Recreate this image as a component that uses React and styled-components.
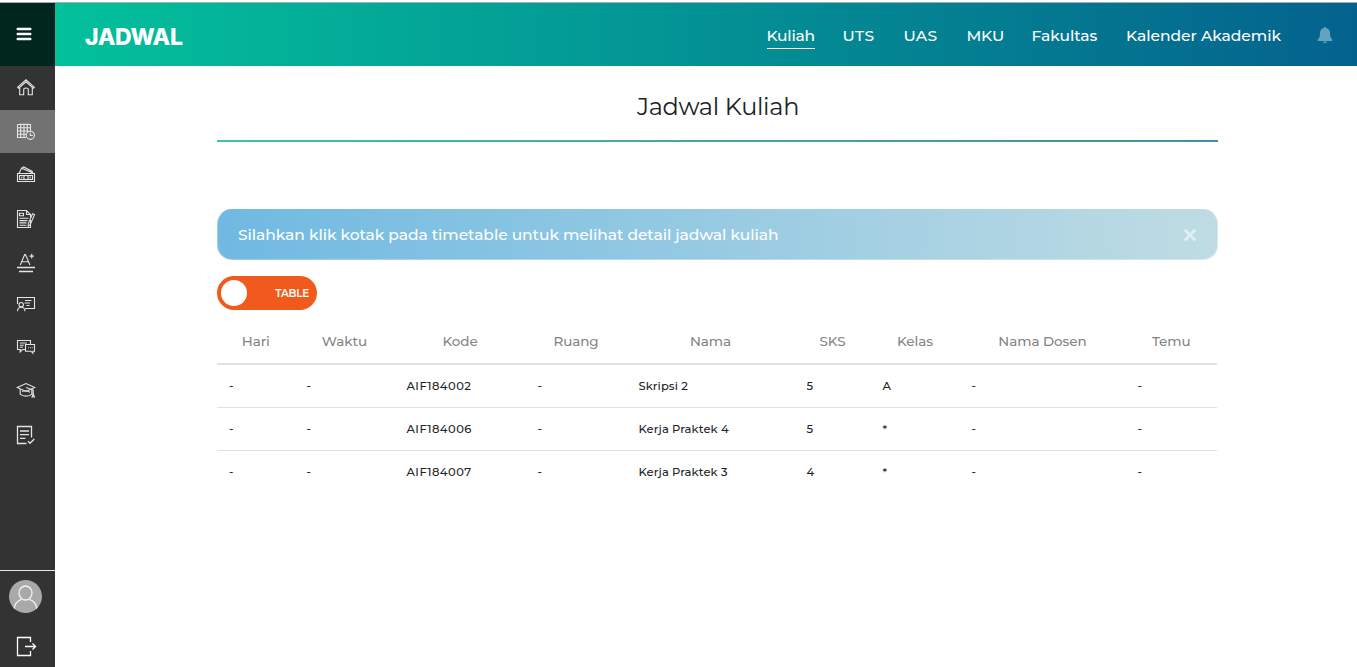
import React from "react";
import styled, { createGlobalStyle } from "styled-components";

const Global = createGlobalStyle`
  *, *::before, *::after { box-sizing: border-box; }
  body { margin: 0; background: #fff; font-family: Montserrat, Inter, sans-serif; color: #212529; overflow: hidden; }
`;

const Page = styled.div`
  height: 667px;
  padding-top: 2px;
  display: flex;
  flex-direction: column;
`;
const Header = styled.header`
  height: 64px;
  flex: none;
  display: flex;
  border-top: 1px solid #a9adad;
`;
const MenuButton = styled.button`
  width: 55px;
  border: 0;
  padding: 0 0 1px 16px;
  background: #00261e;
  display: flex;
  align-items: center;
`;
const Bar = styled.div`
  flex: 1;
  display: flex;
  align-items: center;
  justify-content: space-between;
  padding: 0 24px 0 30px;
  background: linear-gradient(90deg, #03c19b 0%, #04628e 100%);
`;
const Brand = styled.h1`
  margin: 0;
  padding-top: 4px;
  font: 800 23px/30px Inter, sans-serif;
  letter-spacing: -0.4px;
  color: #fff;
`;
const Nav = styled.nav`
  display: flex;
  align-items: center;
  gap: 28px;
`;
const NavLink = styled.a`
  width: ${(p) => p.$w}px;
  height: 27px;
  margin-top: 1px;
  white-space: nowrap;
  font-size: 15.5px;
  line-height: 28px;
  font-weight: 500;
  letter-spacing: ${(p) => p.$ls}px;
  color: #fff;
  border-bottom: 1px solid ${(p) => (p.$active ? "#fff" : "transparent")};
`;
const BellSlot = styled.span`
  display: flex;
  margin-left: 8px;
`;
const Body = styled.div`
  flex: 1;
  display: flex;
  min-height: 0;
`;
const Sidebar = styled.aside`
  width: 55px;
  display: flex;
  flex-direction: column;
  background: #333;
`;
const SideItem = styled.a`
  height: ${(p) => p.$h}px;
  padding-left: 16px;
  display: flex;
  align-items: center;
  background: ${(p) => (p.$active ? "#727272" : "transparent")};
`;
const Account = styled.div`
  margin-top: auto;
  height: 97px;
  padding: 9px 0 0 9px;
  border-top: 1px solid #e6e6e6;
  display: flex;
  flex-direction: column;
  gap: 22px;
`;
const Avatar = styled.div`
  width: 33px;
  height: 33px;
  border-radius: 50%;
  overflow: hidden;
  background: #a9a9a9;
`;
const Logout = styled.a`
  display: flex;
  padding-left: 7px;
`;
const Main = styled.main`
  width: 1001px;
  margin-left: 162px;
`;
const Title = styled.h2`
  height: 76px;
  margin: 0;
  padding: 24px 0 0 1px;
  text-align: center;
  font-size: 24px;
  line-height: 34px;
  font-weight: 450;
  letter-spacing: -0.3px;
  color: #222;
  border-bottom: 2px solid;
  border-image: linear-gradient(90deg, #3cc3a6, #4a8ba9) 1;
`;
const Alert = styled.div`
  height: 51px;
  margin-top: 67px;
  padding: 0 21px 0 20px;
  display: flex;
  align-items: center;
  justify-content: space-between;
  border: 1px solid rgba(255, 255, 255, 0.3);
  border-top-color: transparent;
  border-radius: 15px;
  background: linear-gradient(90deg, #70b9e2, #bfdce3) border-box;
  color: #fff;
  font-size: 15.5px;
  font-weight: 500;
  letter-spacing: -0.06px;
`;
const Toggle = styled.div`
  width: 100px;
  height: 34px;
  margin-top: 16px;
  padding: 0 8px 0 4px;
  border-radius: 17px;
  display: flex;
  align-items: center;
  justify-content: space-between;
  background: #f25a1d;
  color: #fff;
  font-size: 10.5px;
  font-weight: 600;
  letter-spacing: -0.3px;
`;
const Knob = styled.span`
  width: 26px;
  height: 26px;
  border-radius: 50%;
  background: #fff;
`;
const Table = styled.table`
  width: 1000px;
  margin-top: 10px;
  table-layout: fixed;
  border-collapse: separate;
  border-spacing: 0;
`;
const Th = styled.th`
  width: ${(p) => p.$w}px;
  height: 45px;
  padding: 0 0 1px;
  border-bottom: 2px solid #dee2e6;
  font-size: 13.5px;
  font-weight: 500;
  letter-spacing: -0.06px;
  color: #858585;
`;
const Td = styled.td`
  height: 43px;
  padding: 0 0 1px 12px;
  border-bottom: ${(p) => (p.$last ? 0 : 1)}px solid #dee2e6;
  font-size: 11.5px;
  font-weight: 500;
  letter-spacing: ${(p) => (p.$code ? 0.45 : 0.1)}px;
  white-space: nowrap;
`;

const Line = ({ children, size = 20, h = size, sw = 1.1, ...rest }) => (
  <svg width={size} height={h} viewBox={`0 0 ${size} ${h}`} fill="none" stroke="#e4e4e4" strokeWidth={sw} {...rest}>
    {children}
  </svg>
);

const icons = {
  home: <path d="M1.700 9.200 10 1.800l8.300 7.400-1 1-7.300-6.400-7.300 6.400zM3.700 9.500v7.300h4v-5q0-1.800 2.300-1.800t2.300 1.800v5h4V9.500" />,
  schedule: (
    <>
      <path d="M1.500 2.500h13v7M1.500 2.500v13H10M1.500 5.700h13M1.500 9h11M1.500 12.200H10M4.700 1.500v14M8 1.500v14M11.300 1.500V10" />
      <circle cx="14.300" cy="13.300" r="4.100" />
      <path d="M14.300 10.800v2.700h2.500" />
    </>
  ),
  money: (
    <>
      <path d="M1.500 8.500h17v8h-17zM3.500 10.500h13v4h-13zM3 8.200l2.600-5L17 8M5.600 3.200l2-1.200 8.700 4.400v1.400" />
      <circle cx="10" cy="12.500" r="2.200" />
      <path d="M5.800 11.500v2M14.200 11.500v2" />
    </>
  ),
  form: (
    <>
      <path d="M14.500 11v7.500h-13v-17h9l4 4v3M10.500 1.500v4h4M3.500 4.200h4v2.600h-4zM3.500 9.300h9M3.500 11.600h8M3.500 13.900h7M3.500 16.200h7" />
      <path d="m16.500 4.800 2 .8-4.300 10-2 1.700.1-2.700z" />
    </>
  ),
  grade: (
    <>
      <path d="m4.300 12 4.400-10.500h.8L13.900 12M5.800 8.700h6.600M15.700.8v4.600M13.500 3.100h4.400" />
      <path d="M1 14.500h18M3 18.500h14" strokeWidth="1.300" />
    </>
  ),
  lecture: (
    <>
      <path d="M1.500 9V2.500h17v11H9M9 5.500h6.500M8.500 8h5.500M10.500 10.500h3" />
      <circle cx="5.200" cy="9.700" r="2.200" />
      <path d="M1.500 16.300q.2-4 3.700-4t3.800 4" />
    </>
  ),
  chat: (
    <>
      <path d="M9 12.500H6.500l-2.300 2.300v-2.300H1.500v-9h13V7M3.800 6h7M3.800 8.200h4M3.800 10.200h3" />
      <path d="M9.500 7.500h9v6.700h-1.600v2l-2-2H9.500z" />
      <path d="M12 10.800h.9m1 0h.9m1 0h.9" />
    </>
  ),
  graduate: (
    <>
      <path d="m1.200 6.500 8.800-4 8.800 4-8.800 4z" />
      <path d="M4.200 8v5.100q2 2 5.800 2t5.800-2V8M6 10.400q4-1.500 7.900.8M10 6.500l7.200 2.600v4.400" />
      <path d="m17.200 13 1.300 3h-2.500z" />
    </>
  ),
  checklist: <path d="M10.500 18.500h-9v-17h14v11M4 6h9M4 9.700h9M4 13.400h5.500M12 16.300l2 2 4.300-4.300" strokeWidth="1.300" />,
};

const menu = [
  ["home", 44], ["schedule", 43], ["money", 43], ["form", 45], ["grade", 43],
  ["lecture", 41], ["chat", 44], ["graduate", 44], ["checklist", 44],
];
const links = [
  ["Kuliah", 48, -0.25], ["UTS", 33, 0.5], ["UAS", 35, 0.3], ["MKU", 37, -0.2], ["Fakultas", 66.5, -0.05], ["Kalender Akademik", 155, -0.03],
];
const columns = [
  ["Hari", 77.5], ["Waktu", 100], ["Kode", 131], ["Ruang", 101], ["Nama", 168],
  ["SKS", 76], ["Kelas", 89], ["Nama Dosen", 166], ["Temu", 91.5],
];
const rows = [
  ["-", "-", "AIF184002", "-", "Skripsi 2", "5", "A", "-", "-"],
  ["-", "-", "AIF184006", "-", "Kerja Praktek 4", "5", "*", "-", "-"],
  ["-", "-", "AIF184007", "-", "Kerja Praktek 3", "4", "*", "-", "-"],
];

export default function App() {
  return (
    <Page>
      <Global />
      <Header>
        <MenuButton aria-label="Menu">
          <svg width="16" height="14" stroke="#fff" strokeWidth="2.400" strokeLinecap="round">
            <path d="M1.700 2h12.600M1.700 7h12.600M1.700 12h12.600" />
          </svg>
        </MenuButton>
        <Bar>
          <Brand>JADWAL</Brand>
          <Nav>
            {links.map(([label, w, ls], i) => (
              <NavLink key={label} $w={w} $ls={ls} $active={i === 0}>{label}</NavLink>
            ))}
            <BellSlot>
              <svg width="16" height="18" viewBox="0 0 16 18" fill="#64a3bc">
                <path d="M8 1q1.100 0 1.300 1.100C12 2.800 13 5 13 7.200c0 3.700.9 4.800 2.300 6.200V15H.7v-1.600C2.100 12 3 10.900 3 7.200 3 5 4 2.800 6.700 2.100Q6.900 1 8 1zM6 15.500h4q-.3 1.700-2 1.700t-2-1.700z" />
              </svg>
            </BellSlot>
          </Nav>
        </Bar>
      </Header>
      <Body>
        <Sidebar>
          {menu.map(([name, h]) => (
            <SideItem key={name} $h={h} $active={name === "schedule"}>
              <Line>{icons[name]}</Line>
            </SideItem>
          ))}
          <Account>
            <Avatar>
              <Line size={33} sw={1.3} stroke="#f2f2f2">
                <ellipse cx="16.500" cy="13" rx="6.500" ry="7" />
                <path d="M5 29.500q.5-7.500 7.500-10.200M28 29.500q-.5-7.500-7.500-10.200" />
              </Line>
            </Avatar>
            <Logout>
              <Line size={22} sw={1.3} stroke="#fff">
                <path d="M14.500 7V2.500h-13v18h13V16M9 11.500h10.500M16.500 8.500l3 3-3 3" />
              </Line>
            </Logout>
          </Account>
        </Sidebar>
        <Main>
          <Title>Jadwal Kuliah</Title>
          <Alert>
            <span>Silahkan klik kotak pada timetable untuk melihat detail jadwal kuliah</span>
            <svg width="12" height="12" stroke="#e2f0f5" strokeWidth="2.600" strokeLinecap="round">
              <path d="m1.500 1.500 9 9m0-9-9 9" />
            </svg>
          </Alert>
          <Toggle><Knob />TABLE</Toggle>
          <Table>
            <thead>
              <tr>{columns.map(([label, w]) => <Th key={label} $w={w}>{label}</Th>)}</tr>
            </thead>
            <tbody>
              {rows.map((row, r) => (
                <tr key={row[2]}>
                  {row.map((cell, c) => <Td key={c} $code={c === 2} $last={r === rows.length - 1}>{cell}</Td>)}
                </tr>
              ))}
            </tbody>
          </Table>
        </Main>
      </Body>
    </Page>
  );
}
